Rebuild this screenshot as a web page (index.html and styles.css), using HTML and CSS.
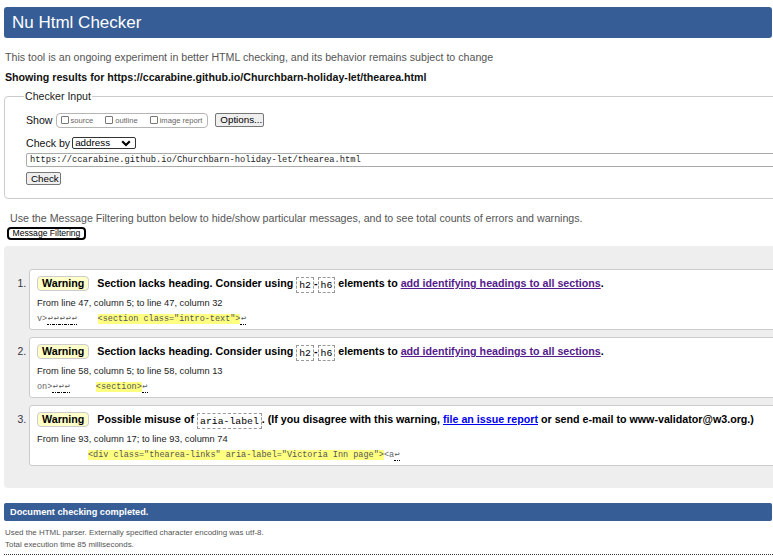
FILE: index.html
```html
<!DOCTYPE html>
<html lang="en">
<head>
<meta charset="utf-8">
<title>Nu Html Checker</title>
<link rel="stylesheet" href="styles.css">
</head>
<body>
<h1 class="title">Nu Html Checker</h1>
<p class="intro">This tool is an ongoing experiment in better HTML checking, and its behavior remains subject to change</p>
<p class="showing">Showing results for https://ccarabine.github.io/Churchbarn-holiday-let/thearea.html</p>

<fieldset class="checker">
  <legend>Checker Input</legend>
  <div class="row">
    <span class="lbl">Show</span>
    <span class="showbox">
      <label class="opt"><span class="cb"></span>source</label>
      <label class="opt"><span class="cb"></span>outline</label>
      <label class="opt"><span class="cb"></span>image report</label>
    </span>
    <button class="btn btn-options" type="button">Options...</button>
  </div>
  <div class="row row-check">
    <span class="lbl">Check by</span>
    <span class="select">address<svg class="chev" width="10" height="7" viewBox="0 0 10 7"><path d="M1.2 1.3 L5 5 L8.8 1.3" fill="none" stroke="#000" stroke-width="2.2"/></svg></span>
  </div>
  <div class="url">https://ccarabine.github.io/Churchbarn-holiday-let/thearea.html</div>
  <button class="btn btn-check" type="button">Check</button>
</fieldset>

<p class="filter-note">Use the Message Filtering button below to hide/show particular messages, and to see total counts of errors and warnings.</p>
<button class="filter-btn" type="button">Message Filtering</button>

<div class="results">
  <ol class="messages">
    <li>
      <div class="msg">
        <p class="text"><strong class="badge">Warning</strong> <span class="body">Section lacks heading. Consider using <code>h2</code>-<code>h6</code> elements to <a class="visited" href="#">add identifying headings to all sections</a>.</span></p>
        <p class="location">From line 47, column 5; to line 47, column 32</p>
        <p class="extract">v&gt;<b class="lf">↩</b><b class="lf">↩</b><b class="lf">↩</b><b class="lf">↩</b><b class="lf">↩</b>    <mark>&lt;section class="intro-text"&gt;</mark><b class="lf">↩</b></p>
      </div>
    </li>
    <li>
      <div class="msg">
        <p class="text"><strong class="badge">Warning</strong> <span class="body">Section lacks heading. Consider using <code>h2</code>-<code>h6</code> elements to <a class="visited" href="#">add identifying headings to all sections</a>.</span></p>
        <p class="location">From line 58, column 5; to line 58, column 13</p>
        <p class="extract">on&gt;<b class="lf">↩</b><b class="lf">↩</b><b class="lf">↩</b>     <mark>&lt;section&gt;</mark><b class="lf">↩</b></p>
      </div>
    </li>
    <li>
      <div class="msg">
        <p class="text"><strong class="badge">Warning</strong> <span class="body">Possible misuse of <code>aria-label</code>. (If you disagree with this warning, <a class="fresh" href="#">file an issue report</a> or send e-mail to www-validator@w3.org.)</span></p>
        <p class="location">From line 93, column 17; to line 93, column 74</p>
        <p class="extract">          <mark>&lt;div class="thearea-links" aria-label="Victoria Inn page"&gt;</mark>&lt;a<b class="lf">↩</b></p>
      </div>
    </li>
  </ol>
</div>

<p class="done">Document checking completed.</p>
<p class="details">Used the HTML parser. Externally specified character encoding was utf-8.</p>
<p class="details">Total execution time 85 milliseconds.</p>
<div class="dotted"></div>
</body>
</html>
```

FILE: styles.css
```css
html, body {
  overflow: hidden;
}

body {
  margin: 0;
  padding: 7px 0 0 4px;
  font-family: "Liberation Sans", Arial, sans-serif;
  font-size: 10.65px;
  color: #000;
  background: #fff;
}

p {
  margin: 0;
}

.title {
  margin: 0 1px 0 0;
  height: 31px;
  line-height: 31px;
  padding-left: 8px;
  background: #365d95;
  color: #fff;
  font-size: 17px;
  font-weight: normal;
  border-radius: 3px;
}

.intro {
  margin: 12px 0 0 1px;
  line-height: 14px;
  font-size: 10.65px;
  color: #555;
}

.showing {
  margin: 6px 0 0 1px;
  line-height: 14px;
  font-size: 10.65px;
  font-weight: bold;
  color: #111;
}

.checker {
  margin: 5px -60px 0 0;
  padding: 9px 0 13px 21px;
  border: 1px solid #ccc;
  border-radius: 4px;
  min-width: 0;
}

.checker legend {
  margin-left: -2px;
  padding: 0 1px;
  font-size: 10.6px;
  line-height: 14px;
  color: #222;
}

.row {
  display: flex;
  align-items: center;
  height: 16px;
}

.lbl {
  font-size: 10.6px;
  color: #111;
}

.showbox {
  display: flex;
  align-items: center;
  gap: 12px;
  height: 13px;
  margin-left: 3px;
  padding: 0 5px 0 4px;
  border: 1px solid #b5b5b5;
  border-radius: 4px;
}

.opt {
  display: flex;
  align-items: center;
  gap: 2px;
  font-size: 7.6px;
  color: #666;
}

.cb {
  width: 6px;
  height: 6px;
  border: 1px solid #777;
  border-radius: 1px;
  background: #fff;
}

.btn {
  height: 14px;
  padding: 0 4px;
  font-family: "Liberation Sans", Arial, sans-serif;
  font-size: 9.8px;
  line-height: 12px;
  color: #000;
  background: #efefef;
  border: 1px solid #767676;
  border-radius: 2px;
}

.btn-options {
  margin-left: 7px;
  width: 49px;
}

.row-check {
  margin-top: 7px;
}

.select {
  display: flex;
  align-items: center;
  justify-content: space-between;
  height: 10px;
  margin-left: 2px;
  padding: 0 4px 0 2px;
  font-size: 9.8px;
  line-height: 10px;
  border: 1px solid #333;
  border-radius: 2px;
  box-sizing: content-box;
  width: 56px;
}

.chev {
  display: block;
}

.url {
  margin-top: 2px;
  height: 12px;
  line-height: 12px;
  padding-left: 3px;
  font-family: "Liberation Mono", "DejaVu Sans Mono", monospace;
  font-size: 8.75px;
  color: #222;
  border: 1px solid #aaa;
  border-radius: 2px;
  white-space: nowrap;
}

.btn-check {
  margin-top: 5px;
  width: 35px;
  height: 13px;
  display: block;
}

.filter-note {
  margin: 12px 0 0 6px;
  line-height: 14px;
  font-size: 10.65px;
  color: #555;
}

.filter-btn {
  display: block;
  margin: 2px 0 0 3px;
  width: 79px;
  height: 13px;
  padding: 0;
  font-family: "Liberation Sans", Arial, sans-serif;
  font-size: 8.6px;
  line-height: 9px;
  color: #000;
  background: #fff;
  border: 2px solid #000;
  border-radius: 4px;
}

.results {
  margin: 6px -60px 0 0;
  padding: 23px 0 22px 0;
  background: #eee;
  border-radius: 4px;
}

.messages {
  margin: 0;
  padding: 0 0 0 25px;
  font-size: 10.4px;
  color: #334;
}

.messages li {
  margin-bottom: 7px;
}

.messages li:last-child {
  margin-bottom: 0;
}

.msg {
  padding: 4px 0 3px 7px;
  background: #fff;
  border: 1px solid #ccc;
  border-radius: 3px;
  color: #000;
}

.text {
  height: 19px;
  line-height: 19px;
  white-space: nowrap;
}

.badge {
  display: inline-block;
  padding: 0 4px;
  line-height: 13px;
  font-size: 10.7px;
  font-weight: bold;
  background: #ffffc8;
  border: 1px solid #ccc;
  border-radius: 4px;
  margin-right: 5px;
}

.body {
  font-weight: bold;
  font-size: 10.7px;
}

code {
  font-family: "Liberation Mono", "DejaVu Sans Mono", monospace;
  font-weight: normal;
  font-size: 9.8px;
  padding: 1.5px 2px;
  border: 1px dashed #999;
}

a.visited {
  color: #551a8b;
}

a.fresh {
  color: #0000ee;
}

.location {
  margin-top: 3px;
  height: 14px;
  line-height: 14px;
  font-size: 9.3px;
  color: #222;
}

.extract {
  margin-top: 2px;
  height: 14px;
  line-height: 14px;
  font-family: "Liberation Mono", "DejaVu Sans Mono", monospace;
  font-size: 8.5px;
  color: #666;
  white-space: pre;
}

.extract mark {
  background: #ffff80;
  color: #555;
}

.lf {
  display: inline-block;
  width: 6px;
  height: 11px;
  line-height: 11px;
  text-align: center;
  vertical-align: middle;
  font-family: "DejaVu Sans Mono", monospace;
  font-size: 8.5px;
  font-weight: normal;
  color: #555;
  border-bottom: 1px dotted #000;
}

.done {
  margin: 15px 1px 0 0;
  height: 18px;
  line-height: 18px;
  padding-left: 6px;
  background: #365d95;
  color: #fff;
  font-size: 9.2px;
  font-weight: bold;
  border-radius: 2px;
}

.details {
  margin: 8px 0 0 1px;
  line-height: 8px;
  font-size: 7.95px;
  color: #555;
}

.details + .details {
  margin-top: 4px;
}

.dotted {
  margin-top: 5px;
  border-top: 1px dotted #333;
}
```
